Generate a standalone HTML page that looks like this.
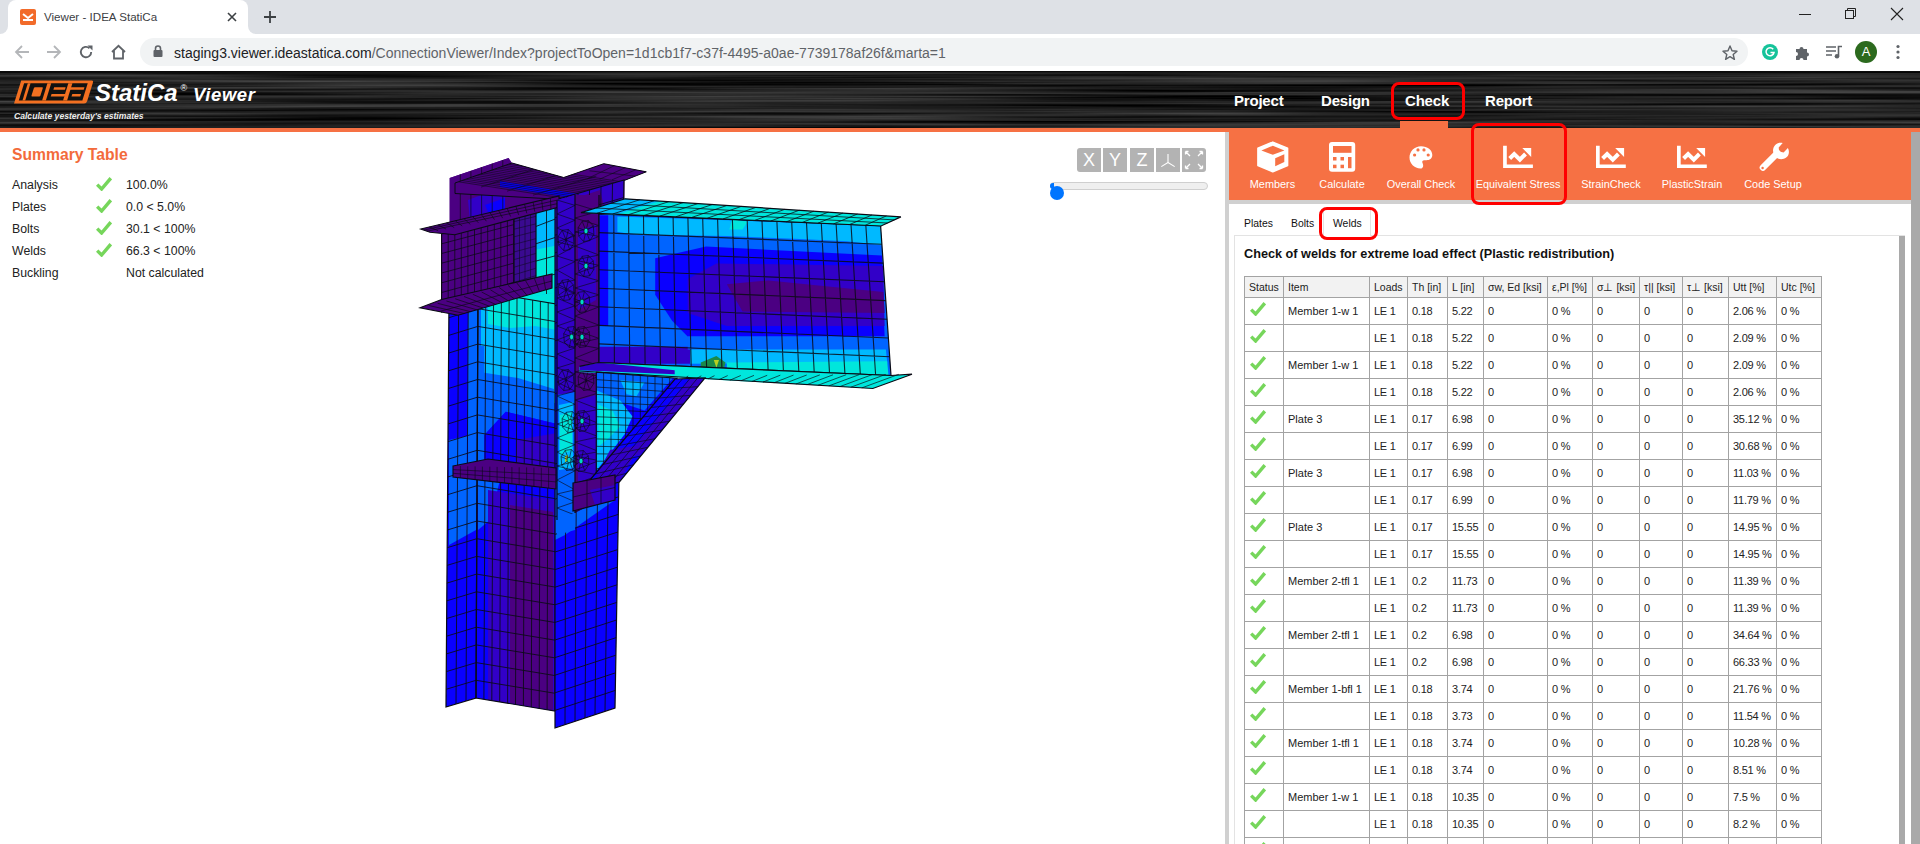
<!DOCTYPE html>
<html><head><meta charset="utf-8"><title>Viewer - IDEA StatiCa</title>
<style>
*{margin:0;padding:0;box-sizing:border-box}
html,body{width:1920px;height:844px;overflow:hidden;background:#fff;font-family:"Liberation Sans",sans-serif;color:#000}
.a{position:absolute}
#tabs{left:0;top:0;width:1920px;height:34px;background:#dee1e6}
#tab{left:8px;top:0;width:240px;height:34px;background:#fff;border-radius:8px 8px 0 0}
#toolbar{left:0;top:34px;width:1920px;height:37px;background:#fff}
#omni{left:140px;top:38px;width:1608px;height:28px;background:#f1f3f4;border-radius:14px}
#hdr{left:0;top:71px;width:1920px;height:57px;background:#1f1f1f;overflow:hidden}
#oline{left:0;top:128px;width:1920px;height:4px;background:#f67144}
.nav{color:#fff;font-weight:bold;font-size:15px;top:91.5px;letter-spacing:-0.2px}
.redbox{border:3.5px solid #f00;border-radius:8px}
#sep{left:1225px;top:132px;width:4px;height:712px;background:#d0d0d0}
#otb{left:1229px;top:128px;width:682px;height:72px;background:#f67144}
#gband{left:1229px;top:200px;width:682px;height:4px;background:#d0d0d0}
#oscroll{left:1911px;top:132px;width:9px;height:712px;background:#a9a9a9}
.tbtn{top:128px;height:72px;color:#fff;font-size:10.9px;text-align:center}
.tbtn svg{position:absolute;left:50%;top:14px;margin-left:-16px}
.tbtn span{position:absolute;left:0;right:0;top:50px;white-space:nowrap}
.sumrow{left:12px;font-size:12.3px;color:#222;height:22px;line-height:22px}
.vbtn{top:148px;width:24px;height:24px;background:#b3b3b3;color:#fff;font-size:18px;text-align:center;line-height:24px}
table{border-collapse:collapse;font-size:11px;table-layout:fixed}
td,th{border:1px solid #a3a3a3;height:27px;padding:0 0 0 4px;text-align:left;font-weight:normal;white-space:nowrap;overflow:hidden;color:#222}
th{height:21px;background:#f2f2f2;font-size:10.5px}
td{letter-spacing:-0.25px}
td.it{letter-spacing:0}
.ck{display:block;width:16px;height:15px;margin-left:1px;position:relative;top:-2.5px}
</style></head><body>
<!-- browser tab strip -->
<div id="tabs" class="a"></div>
<div id="tab" class="a"></div>
<div class="a" style="left:0;top:26px;width:8px;height:8px;background:#fff"></div><div class="a" style="left:-8px;top:18px;width:16px;height:16px;border-radius:50%;background:#dee1e6"></div>
<div class="a" style="left:248px;top:26px;width:8px;height:8px;background:#fff"></div><div class="a" style="left:248px;top:18px;width:16px;height:16px;border-radius:50%;background:#dee1e6"></div>
<div class="a" style="left:20px;top:9px;width:16px;height:16px;background:#f26b2a;border-radius:2px"><svg width="16" height="16" viewBox="0 0 16 16"><path d="M3 5 L8 9 L13 5" stroke="#fff" stroke-width="2" fill="none"/><rect x="3" y="10" width="10" height="2" fill="#fff"/></svg></div>
<div class="a" style="left:44px;top:9.5px;font-size:11.6px;color:#3c4043">Viewer - IDEA StatiCa</div>
<svg class="a" style="left:226px;top:11px" width="12" height="12" viewBox="0 0 12 12"><path d="M2 2L10 10M10 2L2 10" stroke="#3c4043" stroke-width="1.6"/></svg>
<svg class="a" style="left:263px;top:10px" width="14" height="14" viewBox="0 0 14 14"><path d="M7 1V13M1 7H13" stroke="#3c4043" stroke-width="1.8"/></svg>
<svg class="a" style="left:1798px;top:8px" width="14" height="14"><path d="M1 6.5H13" stroke="#222" stroke-width="1"/></svg>
<svg class="a" style="left:1844px;top:7px" width="14" height="14"><rect x="1.5" y="3.5" width="8" height="8" fill="none" stroke="#222"/><path d="M3.5 3.5V1.5H11.5V9.5H9.5" fill="none" stroke="#222"/></svg>
<svg class="a" style="left:1890px;top:7px" width="14" height="14"><path d="M1 1L13 13M13 1L1 13" stroke="#222" stroke-width="1.1"/></svg>
<!-- toolbar -->
<div id="toolbar" class="a"></div>
<svg class="a" style="left:14px;top:44px" width="16" height="16" viewBox="0 0 16 16"><path d="M15 8H2M8 2L2 8L8 14" stroke="#b4b6b9" stroke-width="1.8" fill="none"/></svg>
<svg class="a" style="left:46px;top:44px" width="16" height="16" viewBox="0 0 16 16"><path d="M1 8H14M8 2L14 8L8 14" stroke="#b4b6b9" stroke-width="1.8" fill="none"/></svg>
<svg class="a" style="left:78px;top:44px" width="16" height="16" viewBox="0 0 16 16"><path d="M13.2 8A5.2 5.2 0 1 1 11.5 4.2" stroke="#5f6368" stroke-width="1.9" fill="none"/><path d="M9.5 1.5H14.5V6.5Z" fill="#5f6368"/></svg>
<svg class="a" style="left:110px;top:44px" width="17" height="16" viewBox="0 0 17 16"><path d="M2 8L8.5 1.8L15 8M4 6.5V14.5H13V6.5" stroke="#5f6368" stroke-width="1.8" fill="none"/></svg>
<div id="omni" class="a"></div>
<svg class="a" style="left:153px;top:45px" width="10" height="12" viewBox="0 0 10 12"><rect x="0.5" y="5" width="9" height="7" rx="1" fill="#5f6368"/><path d="M2.5 5.5V3.5A2.5 2.5 0 0 1 7.5 3.5V5.5" stroke="#5f6368" stroke-width="1.6" fill="none"/></svg>
<div class="a" style="left:174px;top:45px;font-size:14px;color:#202124;white-space:nowrap">staging3.viewer.ideastatica.com<span style="color:#5f6368">/ConnectionViewer/Index?projectToOpen=1d1cb1f7-c37f-4495-a0ae-7739178af26f&amp;marta=1</span></div>
<svg class="a" style="left:1722px;top:45px" width="16" height="15" viewBox="0 0 16 15"><path d="M8 1L10 5.8L15 6.2L11.2 9.5L12.4 14.3L8 11.7L3.6 14.3L4.8 9.5L1 6.2L6 5.8Z" stroke="#5f6368" stroke-width="1.4" fill="none" stroke-linejoin="round"/></svg>
<div class="a" style="left:1762px;top:44px;width:16px;height:16px;border-radius:50%;background:#15c39a"></div>
<svg class="a" style="left:1762px;top:44px" width="16" height="16" viewBox="0 0 16 16"><path d="M11.2 5.2A4 4 0 1 0 12 8.5H8.5" stroke="#fff" stroke-width="1.5" fill="none"/></svg>
<svg class="a" style="left:1795px;top:45px" width="15" height="15" viewBox="0 0 15 15"><path d="M1 4H4.5A2 2 0 0 1 8.5 4H12V7.5A2 2 0 0 1 12 11.5V15H8.5A2 2 0 0 0 4.5 15H1V11A2 2 0 0 0 1 7Z" fill="#5f6368"/></svg>
<svg class="a" style="left:1826px;top:45px" width="17" height="14" viewBox="0 0 17 14"><path d="M0 2H10M0 6H10M0 10H6" stroke="#5f6368" stroke-width="1.6"/><path d="M12.5 11V1.5H16" stroke="#5f6368" stroke-width="1.6" fill="none"/><circle cx="11" cy="11.2" r="2.3" fill="#5f6368"/></svg>
<div class="a" style="left:1855px;top:41px;width:22px;height:22px;border-radius:50%;background:#2c6a1e;color:#fff;font-size:13px;text-align:center;line-height:22px">A</div>
<svg class="a" style="left:1895px;top:44px" width="6" height="16"><circle cx="3" cy="2.5" r="1.6" fill="#5f6368"/><circle cx="3" cy="8" r="1.6" fill="#5f6368"/><circle cx="3" cy="13.5" r="1.6" fill="#5f6368"/></svg>

<!-- app header -->
<svg id="hdr" class="a" width="1920" height="57" viewBox="0 0 1920 57"><filter id="brush" x="0" y="0" width="100%" height="100%" color-interpolation-filters="sRGB"><feTurbulence type="fractalNoise" baseFrequency="0.002 0.3" numOctaves="3" seed="7"/><feColorMatrix type="matrix" values="0 0 0 0.45 -0.1  0 0 0 0.45 -0.1  0 0 0 0.45 -0.1  0 0 0 0 1"/></filter><rect width="1920" height="57" fill="#1c1c1c"/><rect width="1920" height="57" filter="url(#brush)"/><rect width="1920" height="1.5" fill="#0a0a0a"/></svg>
<div id="oline" class="a"></div>
<svg class="a" style="left:10px;top:76px" width="260" height="48" viewBox="10 76 260 48">
<g transform="translate(14.5 103.4) skewX(-17.4) scale(0.922 1)">
<path d="M0 0V-22.9H76.5Q78.5 -22.9 78.5 -20.5V-2.5Q78.5 0 76 0Z" fill="#f37021" transform="translate(-0.5 0)"/>
<rect x="3.6" y="-20.1" width="69" height="17.1" fill="#111"/>
<g fill="#f37021">
<rect x="7.6" y="-20.1" width="3" height="17.1"/>
<rect x="28.9" y="-20.1" width="4.1" height="17.1"/>
<rect x="51.6" y="-20.1" width="4.4" height="17.1"/>
<rect x="15.8" y="-16.2" width="9.7" height="9.4" rx="1"/>
<rect x="37.5" y="-16.2" width="12.5" height="2.5"/>
<rect x="37" y="-9.4" width="15" height="2.6"/>
<rect x="55" y="-16.2" width="15.4" height="2.5"/>
<rect x="59.5" y="-9.4" width="9.5" height="2.6"/>
</g>
</g>
<text x="95" y="100.6" font-family="Liberation Sans" font-weight="bold" font-style="italic" font-size="24" fill="#fff">StatiCa</text>
<text x="180.5" y="90.5" font-family="Liberation Sans" font-size="9" fill="#fff">®</text>
<text x="193" y="100.6" font-family="Liberation Sans" font-weight="bold" font-style="italic" font-size="18.5" fill="#fff" letter-spacing="0.6">Viewer</text>
<text x="14" y="118.5" font-family="Liberation Sans" font-weight="bold" font-style="italic" font-size="8.6" fill="#eee">Calculate yesterday's estimates</text>
</svg>

<div class="a nav" style="left:1234px">Project</div>
<div class="a nav" style="left:1321px">Design</div>
<div class="a nav" style="left:1405px">Check</div>
<div class="a nav" style="left:1485px">Report</div>
<div class="a redbox" style="left:1391px;top:82px;width:74px;height:38px"></div>
<div class="a" style="left:1400px;top:121px;width:48px;height:7px;background:#f67144"></div>

<!-- separators / right toolbar -->
<div id="sep" class="a"></div>
<div id="otb" class="a"></div>
<div id="gband" class="a"></div>
<div id="oscroll" class="a"></div>
<svg class="a" style="left:1229px;top:128px" width="682" height="72" viewBox="1229 128 682 72">
<g fill="#fff">
<path d="M1272.8 142.1L1287.6 148.2V165.5L1272.8 171.8L1257.9 165.5V148.2Z" stroke="#fff" stroke-width="1.5" stroke-linejoin="round"/>
<path d="M1261.4 150.4L1272.8 145.8L1284.4 150.4L1272.8 154.8Z" fill="#f67144"/>
<path d="M1275.2 158.2L1284.3 154.3V161.9L1275.2 166.2Z" fill="#f67144"/>
<rect x="1329" y="142" width="26.2" height="29.8" rx="3"/>
<g fill="#f67144"><rect x="1333" y="146" width="18.5" height="6.8"/><rect x="1333" y="157" width="3.5" height="3.5"/><rect x="1340.5" y="157" width="3.5" height="3.5"/><rect x="1333" y="164.7" width="3.5" height="3.5"/><rect x="1340.5" y="164.7" width="3.5" height="3.5"/><rect x="1348" y="157" width="3.5" height="11.2"/></g>
<path d="M1421 146.2C1427.5 146.2 1432.3 150 1432.3 155C1432.3 158.5 1429.5 160.2 1426.5 160.2H1424.2C1422.6 160.2 1421.8 161.6 1422.5 163C1423.2 164.5 1423.3 165.7 1423 166.8C1422.5 168.2 1421.5 168.5 1420.5 168.5C1414.2 168.5 1409.5 163.3 1409.5 157.5C1409.5 151.2 1414.5 146.2 1421 146.2Z"/>
<g fill="#f67144"><circle cx="1418" cy="149.9" r="1.6"/><circle cx="1424" cy="149.9" r="1.6"/><circle cx="1414.6" cy="155" r="1.6"/><circle cx="1428.2" cy="155" r="1.6"/></g>
<g id="chart"><path d="M1503.1 145.7H1506.8V164.4H1532.9V168H1503.1Z"/><path d="M1509.7 158.5L1514.2 154L1519.9 159.7L1525.5 154" stroke="#fff" stroke-width="4" fill="none" stroke-linejoin="miter"/><path d="M1522.3 148.1H1531.2V157L1527 152.8Z"/></g>
<g transform="translate(92.9 0)"><path d="M1503.1 145.7H1506.8V164.4H1532.9V168H1503.1Z"/><path d="M1509.7 158.5L1514.2 154L1519.9 159.7L1525.5 154" stroke="#fff" stroke-width="4" fill="none" stroke-linejoin="miter"/><path d="M1522.3 148.1H1531.2V157L1527 152.8Z"/></g>
<g transform="translate(173.9 0)"><path d="M1503.1 145.7H1506.8V164.4H1532.9V168H1503.1Z"/><path d="M1509.7 158.5L1514.2 154L1519.9 159.7L1525.5 154" stroke="#fff" stroke-width="4" fill="none" stroke-linejoin="miter"/><path d="M1522.3 148.1H1531.2V157L1527 152.8Z"/></g>
<path d="M1763 167.5L1777.5 153" stroke="#fff" stroke-width="6.6" stroke-linecap="round"/>
<path d="M1782.7 143.1L1778.7 147.4L1779.1 151.6L1783.6 152.4L1787.9 148.1C1789.8 151.5 1789 155.5 1786.2 157.6C1783 160 1778.8 159.8 1776 157.3C1772.5 154 1772 148.8 1775 145.2C1777 142.8 1780 142.2 1782.7 143.1Z"/>
<circle cx="1762.6" cy="168" r="1.2" fill="#f67144"/>
</g>
</svg>
<div class="a tbtn" style="left:1242px;width:61px"><span>Members</span></div>
<div class="a tbtn" style="left:1312px;width:60px"><span>Calculate</span></div>
<div class="a tbtn" style="left:1381px;width:80px"><span>Overall Check</span></div>
<div class="a tbtn" style="left:1468px;width:100px"><span>Equivalent Stress</span></div>
<div class="a tbtn" style="left:1571px;width:80px"><span>StrainCheck</span></div>
<div class="a tbtn" style="left:1652px;width:80px"><span>PlasticStrain</span></div>
<div class="a tbtn" style="left:1733px;width:80px"><span>Code Setup</span></div>
<div class="a redbox" style="left:1471px;top:123px;width:96px;height:82px"></div>


<!-- panel -->
<div class="a" style="left:1234px;top:235px;width:671px;height:609px;border:1px solid #e3e3e3;border-bottom:none"></div>
<div class="a" style="left:1899px;top:236px;width:6px;height:608px;background:#a9a9a9"></div>
<div class="a" style="left:1244px;top:217.5px;font-size:10.4px;color:#111">Plates</div>
<div class="a" style="left:1291px;top:217.5px;font-size:10.4px;color:#111">Bolts</div>
<div class="a" style="left:1323px;top:209px;width:48px;height:27px;background:#fff;border:1px solid #e3e3e3;border-bottom:none"></div>
<div class="a" style="left:1333px;top:217.5px;font-size:10.4px;color:#111">Welds</div>
<div class="a redbox" style="left:1319px;top:207px;width:59px;height:33px"></div>
<div class="a" style="left:1244px;top:247px;font-size:12.7px;font-weight:bold;color:#111;white-space:nowrap">Check of welds for extreme load effect (Plastic redistribution)</div>

<div id="tbl" class="a" style="left:1244px;top:276px"><table style="width:578px"><colgroup><col style="width:39px"><col style="width:86px"><col style="width:38px"><col style="width:40px"><col style="width:36px"><col style="width:64px"><col style="width:45px"><col style="width:47px"><col style="width:43px"><col style="width:46px"><col style="width:48px"><col style="width:45px"></colgroup><tr><th>Status</th><th>Item</th><th>Loads</th><th>Th [in]</th><th>L [in]</th><th>&sigma;w, Ed [ksi]</th><th>&epsilon;,Pl [%]</th><th>&sigma;&perp; [ksi]</th><th>&tau;|| [ksi]</th><th>&tau;&perp; [ksi]</th><th>Utt [%]</th><th>Utc [%]</th></tr><tr><td><svg class="ck" viewBox="0 0 16 15"><path d="M1.2 8.6L5.6 13L14.8 2.2" stroke="#76d65b" stroke-width="3.4" fill="none" stroke-linecap="butt"/></svg></td><td class="it">Member 1-w 1</td><td>LE 1</td><td>0.18</td><td>5.22</td><td>0</td><td>0 %</td><td>0</td><td>0</td><td>0</td><td>2.06 %</td><td>0 %</td></tr><tr><td><svg class="ck" viewBox="0 0 16 15"><path d="M1.2 8.6L5.6 13L14.8 2.2" stroke="#76d65b" stroke-width="3.4" fill="none" stroke-linecap="butt"/></svg></td><td class="it"></td><td>LE 1</td><td>0.18</td><td>5.22</td><td>0</td><td>0 %</td><td>0</td><td>0</td><td>0</td><td>2.09 %</td><td>0 %</td></tr><tr><td><svg class="ck" viewBox="0 0 16 15"><path d="M1.2 8.6L5.6 13L14.8 2.2" stroke="#76d65b" stroke-width="3.4" fill="none" stroke-linecap="butt"/></svg></td><td class="it">Member 1-w 1</td><td>LE 1</td><td>0.18</td><td>5.22</td><td>0</td><td>0 %</td><td>0</td><td>0</td><td>0</td><td>2.09 %</td><td>0 %</td></tr><tr><td><svg class="ck" viewBox="0 0 16 15"><path d="M1.2 8.6L5.6 13L14.8 2.2" stroke="#76d65b" stroke-width="3.4" fill="none" stroke-linecap="butt"/></svg></td><td class="it"></td><td>LE 1</td><td>0.18</td><td>5.22</td><td>0</td><td>0 %</td><td>0</td><td>0</td><td>0</td><td>2.06 %</td><td>0 %</td></tr><tr><td><svg class="ck" viewBox="0 0 16 15"><path d="M1.2 8.6L5.6 13L14.8 2.2" stroke="#76d65b" stroke-width="3.4" fill="none" stroke-linecap="butt"/></svg></td><td class="it">Plate 3</td><td>LE 1</td><td>0.17</td><td>6.98</td><td>0</td><td>0 %</td><td>0</td><td>0</td><td>0</td><td>35.12 %</td><td>0 %</td></tr><tr><td><svg class="ck" viewBox="0 0 16 15"><path d="M1.2 8.6L5.6 13L14.8 2.2" stroke="#76d65b" stroke-width="3.4" fill="none" stroke-linecap="butt"/></svg></td><td class="it"></td><td>LE 1</td><td>0.17</td><td>6.99</td><td>0</td><td>0 %</td><td>0</td><td>0</td><td>0</td><td>30.68 %</td><td>0 %</td></tr><tr><td><svg class="ck" viewBox="0 0 16 15"><path d="M1.2 8.6L5.6 13L14.8 2.2" stroke="#76d65b" stroke-width="3.4" fill="none" stroke-linecap="butt"/></svg></td><td class="it">Plate 3</td><td>LE 1</td><td>0.17</td><td>6.98</td><td>0</td><td>0 %</td><td>0</td><td>0</td><td>0</td><td>11.03 %</td><td>0 %</td></tr><tr><td><svg class="ck" viewBox="0 0 16 15"><path d="M1.2 8.6L5.6 13L14.8 2.2" stroke="#76d65b" stroke-width="3.4" fill="none" stroke-linecap="butt"/></svg></td><td class="it"></td><td>LE 1</td><td>0.17</td><td>6.99</td><td>0</td><td>0 %</td><td>0</td><td>0</td><td>0</td><td>11.79 %</td><td>0 %</td></tr><tr><td><svg class="ck" viewBox="0 0 16 15"><path d="M1.2 8.6L5.6 13L14.8 2.2" stroke="#76d65b" stroke-width="3.4" fill="none" stroke-linecap="butt"/></svg></td><td class="it">Plate 3</td><td>LE 1</td><td>0.17</td><td>15.55</td><td>0</td><td>0 %</td><td>0</td><td>0</td><td>0</td><td>14.95 %</td><td>0 %</td></tr><tr><td><svg class="ck" viewBox="0 0 16 15"><path d="M1.2 8.6L5.6 13L14.8 2.2" stroke="#76d65b" stroke-width="3.4" fill="none" stroke-linecap="butt"/></svg></td><td class="it"></td><td>LE 1</td><td>0.17</td><td>15.55</td><td>0</td><td>0 %</td><td>0</td><td>0</td><td>0</td><td>14.95 %</td><td>0 %</td></tr><tr><td><svg class="ck" viewBox="0 0 16 15"><path d="M1.2 8.6L5.6 13L14.8 2.2" stroke="#76d65b" stroke-width="3.4" fill="none" stroke-linecap="butt"/></svg></td><td class="it">Member 2-tfl 1</td><td>LE 1</td><td>0.2</td><td>11.73</td><td>0</td><td>0 %</td><td>0</td><td>0</td><td>0</td><td>11.39 %</td><td>0 %</td></tr><tr><td><svg class="ck" viewBox="0 0 16 15"><path d="M1.2 8.6L5.6 13L14.8 2.2" stroke="#76d65b" stroke-width="3.4" fill="none" stroke-linecap="butt"/></svg></td><td class="it"></td><td>LE 1</td><td>0.2</td><td>11.73</td><td>0</td><td>0 %</td><td>0</td><td>0</td><td>0</td><td>11.39 %</td><td>0 %</td></tr><tr><td><svg class="ck" viewBox="0 0 16 15"><path d="M1.2 8.6L5.6 13L14.8 2.2" stroke="#76d65b" stroke-width="3.4" fill="none" stroke-linecap="butt"/></svg></td><td class="it">Member 2-tfl 1</td><td>LE 1</td><td>0.2</td><td>6.98</td><td>0</td><td>0 %</td><td>0</td><td>0</td><td>0</td><td>34.64 %</td><td>0 %</td></tr><tr><td><svg class="ck" viewBox="0 0 16 15"><path d="M1.2 8.6L5.6 13L14.8 2.2" stroke="#76d65b" stroke-width="3.4" fill="none" stroke-linecap="butt"/></svg></td><td class="it"></td><td>LE 1</td><td>0.2</td><td>6.98</td><td>0</td><td>0 %</td><td>0</td><td>0</td><td>0</td><td>66.33 %</td><td>0 %</td></tr><tr><td><svg class="ck" viewBox="0 0 16 15"><path d="M1.2 8.6L5.6 13L14.8 2.2" stroke="#76d65b" stroke-width="3.4" fill="none" stroke-linecap="butt"/></svg></td><td class="it">Member 1-bfl 1</td><td>LE 1</td><td>0.18</td><td>3.74</td><td>0</td><td>0 %</td><td>0</td><td>0</td><td>0</td><td>21.76 %</td><td>0 %</td></tr><tr><td><svg class="ck" viewBox="0 0 16 15"><path d="M1.2 8.6L5.6 13L14.8 2.2" stroke="#76d65b" stroke-width="3.4" fill="none" stroke-linecap="butt"/></svg></td><td class="it"></td><td>LE 1</td><td>0.18</td><td>3.73</td><td>0</td><td>0 %</td><td>0</td><td>0</td><td>0</td><td>11.54 %</td><td>0 %</td></tr><tr><td><svg class="ck" viewBox="0 0 16 15"><path d="M1.2 8.6L5.6 13L14.8 2.2" stroke="#76d65b" stroke-width="3.4" fill="none" stroke-linecap="butt"/></svg></td><td class="it">Member 1-tfl 1</td><td>LE 1</td><td>0.18</td><td>3.74</td><td>0</td><td>0 %</td><td>0</td><td>0</td><td>0</td><td>10.28 %</td><td>0 %</td></tr><tr><td><svg class="ck" viewBox="0 0 16 15"><path d="M1.2 8.6L5.6 13L14.8 2.2" stroke="#76d65b" stroke-width="3.4" fill="none" stroke-linecap="butt"/></svg></td><td class="it"></td><td>LE 1</td><td>0.18</td><td>3.74</td><td>0</td><td>0 %</td><td>0</td><td>0</td><td>0</td><td>8.51 %</td><td>0 %</td></tr><tr><td><svg class="ck" viewBox="0 0 16 15"><path d="M1.2 8.6L5.6 13L14.8 2.2" stroke="#76d65b" stroke-width="3.4" fill="none" stroke-linecap="butt"/></svg></td><td class="it">Member 1-w 1</td><td>LE 1</td><td>0.18</td><td>10.35</td><td>0</td><td>0 %</td><td>0</td><td>0</td><td>0</td><td>7.5 %</td><td>0 %</td></tr><tr><td><svg class="ck" viewBox="0 0 16 15"><path d="M1.2 8.6L5.6 13L14.8 2.2" stroke="#76d65b" stroke-width="3.4" fill="none" stroke-linecap="butt"/></svg></td><td class="it"></td><td>LE 1</td><td>0.18</td><td>10.35</td><td>0</td><td>0 %</td><td>0</td><td>0</td><td>0</td><td>8.2 %</td><td>0 %</td></tr><tr><td><svg class="ck" viewBox="0 0 16 15"><path d="M1.2 8.6L5.6 13L14.8 2.2" stroke="#76d65b" stroke-width="3.4" fill="none" stroke-linecap="butt"/></svg></td><td class="it">Member 1-w 1</td><td>LE 1</td><td>0.18</td><td>10.35</td><td>0</td><td>0 %</td><td>0</td><td>0</td><td>0</td><td>7.5 %</td><td>0 %</td></tr></table></div>

<!-- summary -->
<div class="a" style="left:12px;top:146px;font-size:15.7px;font-weight:bold;color:#f36b3b">Summary Table</div>
<div class="a sumrow" style="top:174px">Analysis</div><svg class="a" style="left:96px;top:176px" width="16" height="15" viewBox="0 0 16 15"><path d="M1.2 8.6L5.6 13L14.8 2.2" stroke="#76d65b" stroke-width="3.4" fill="none"/></svg><div class="a sumrow" style="left:126px;top:174px">100.0%</div><div class="a sumrow" style="top:196px">Plates</div><svg class="a" style="left:96px;top:198px" width="16" height="15" viewBox="0 0 16 15"><path d="M1.2 8.6L5.6 13L14.8 2.2" stroke="#76d65b" stroke-width="3.4" fill="none"/></svg><div class="a sumrow" style="left:126px;top:196px">0.0 &lt; 5.0%</div><div class="a sumrow" style="top:218px">Bolts</div><svg class="a" style="left:96px;top:220px" width="16" height="15" viewBox="0 0 16 15"><path d="M1.2 8.6L5.6 13L14.8 2.2" stroke="#76d65b" stroke-width="3.4" fill="none"/></svg><div class="a sumrow" style="left:126px;top:218px">30.1 &lt; 100%</div><div class="a sumrow" style="top:240px">Welds</div><svg class="a" style="left:96px;top:242px" width="16" height="15" viewBox="0 0 16 15"><path d="M1.2 8.6L5.6 13L14.8 2.2" stroke="#76d65b" stroke-width="3.4" fill="none"/></svg><div class="a sumrow" style="left:126px;top:240px">66.3 &lt; 100%</div><div class="a sumrow" style="top:262px">Buckling</div><div class="a sumrow" style="left:126px;top:262px">Not calculated</div>

<!-- view buttons -->
<div class="a vbtn" style="left:1077px;border-radius:3px 0 0 3px">X</div>
<div class="a vbtn" style="left:1103px">Y</div>
<div class="a vbtn" style="left:1130px">Z</div>
<div class="a vbtn" style="left:1156px"><svg width="24" height="24" style="position:absolute;left:0;top:0"><path d="M12 6V14.5M12 14.5L5.3 18.6M12 14.5L18.7 18.6" stroke="#fff" stroke-width="1.1" fill="none"/></svg></div>
<div class="a vbtn" style="left:1182px;border-radius:0 3px 3px 0"><svg width="24" height="24" style="position:absolute;left:0;top:0" stroke="#fff" stroke-width="1.3" fill="none"><path d="M3.5 3.5L8 8M3.5 3.5H6.5M3.5 3.5V6.5"/><path d="M20.5 3.5L16 8M20.5 3.5H17.5M20.5 3.5V6.5"/><path d="M3.5 20.5L8 16M3.5 20.5H6.5M3.5 20.5V17.5"/><path d="M20.5 20.5L16 16M20.5 20.5H17.5M20.5 20.5V17.5"/></svg></div>
<div class="a" style="left:1050px;top:182px;width:158px;height:8px;background:#efefef;border:1px solid #cfcfcf;border-radius:4px"></div>
<div class="a" style="left:1050px;top:183px;width:4px;height:6px;background:#0075ff;border-radius:3px 0 0 3px"></div>
<div class="a" style="left:1050px;top:186px;width:14px;height:14px;background:#0075ff;border-radius:50%"></div>

<svg class="a" style="left:0;top:0" width="1225" height="844" viewBox="0 0 1225 844"><polygon points="449.7,178.0 508.7,158.0 512.0,163.0 563.7,177.5 603.8,163.7 646.3,171.8 624.4,180.4 624.4,199.0 559.0,210.0 534.0,215.0 449.7,240.0" fill="#4b0082"/><polygon points="449.7,178.0 508.7,158.0 508.7,232.0 449.7,252.0" fill="#4b0082"/><polygon points="468.0,200.0 500.0,188.0 505.0,196.0 505.0,212.0 470.0,222.0" fill="#3200c8"/><polygon points="485.0,205.0 505.0,198.0 505.0,210.0 490.0,216.0" fill="#0a00ff"/><path d="M460.3 174.4L460.3 248.4M470.9 170.8L470.9 244.8M481.6 167.2L481.6 241.2M492.2 163.6L492.2 237.6M502.8 160.0L502.8 234.0" stroke="#0a0a14" stroke-width="0.8" stroke-opacity="0.85" fill="none"/><polygon points="455.0,183.0 512.0,163.0 563.7,177.5 603.8,163.7 646.3,171.8 624.4,180.4 559.0,199.3 455.0,193.5" fill="#4b0082"/><polygon points="500.0,181.0 578.0,194.0 578.0,199.0 500.0,187.0" fill="#0a00ff"/><clipPath id="c1"><polygon points="455.0,183.0 512.0,163.0 563.7,177.5 603.8,163.7 646.3,171.8 624.4,180.4 559.0,199.3 455.0,193.5"/></clipPath><path d="M458.6 181.8L563.1 198.1M462.1 180.5L567.2 196.9M465.7 179.2L571.3 195.8M469.2 178.0L575.4 194.6M472.8 176.8L579.4 193.4M476.4 175.5L583.5 192.2M479.9 174.2L587.6 191.0M483.5 173.0L591.7 189.9M487.1 171.8L595.8 188.7M490.6 170.5L599.9 187.5M494.2 169.2L604.0 186.3M497.8 168.0L608.0 185.1M501.3 166.8L612.1 183.9M504.9 165.5L616.2 182.8M508.4 164.2L620.3 181.6M481.0 187.1L540.1 167.3M507.0 191.2L568.2 171.7M533.0 195.2L596.3 176.1" stroke="#0a0a14" stroke-width="0.7" stroke-opacity="0.85" fill="none" clip-path="url(#c1)"/><clipPath id="c2"><polygon points="455.0,183.0 512.0,163.0 563.7,177.5 603.8,163.7 646.3,171.8 624.4,180.4 559.0,199.3 455.0,193.5"/></clipPath><path d="M614.4 165.7L587.4 178.6M625.0 167.8L599.7 179.2M635.7 169.8L612.0 179.8M589.4 170.8L635.3 176.1" stroke="#0a0a14" stroke-width="0.7" stroke-opacity="0.85" fill="none" clip-path="url(#c2)"/><polygon points="455.0,183.0 512.0,163.0 563.7,177.5 603.8,163.7 646.3,171.8 624.4,180.4 559.0,199.3 455.0,193.5" fill="none" stroke="#0a0a14" stroke-width="1.0"/><polygon points="449.0,300.0 478.0,291.0 476.0,698.0 446.0,707.0" fill="#0a00ff"/><polygon points="478.0,291.0 556.0,304.0 555.0,711.0 476.0,698.0" fill="#0a00ff"/><polygon points="449.0,440.0 467.0,436.0 467.0,480.0 449.0,485.0" fill="#0064ff"/><polygon points="468.0,300.0 478.0,297.0 478.0,480.0 468.0,482.0" fill="#0064ff"/><polygon points="472.0,300.0 557.0,296.0 557.0,424.0 505.8,411.8 484.4,434.9 484.4,480.0 472.0,482.0" fill="#0064ff"/><polygon points="481.0,298.0 557.0,296.0 557.0,403.0 554.0,403.0 554.0,389.0 518.0,378.0 484.4,372.7 484.4,346.0 481.0,346.0" fill="#00b9ff"/><polygon points="488.0,296.0 557.0,292.0 557.0,330.0 535.0,326.0 510.0,328.0 488.0,324.0" fill="#00e6dc"/><polygon points="484.4,434.9 505.8,411.8 557.0,424.0 557.0,480.0 484.4,480.0" fill="#0a00ff"/><polygon points="516.0,440.0 557.0,433.0 557.0,480.0 516.0,480.0" fill="#3200c8"/><polygon points="449.0,480.0 478.0,475.0 476.0,530.0 449.0,545.0" fill="#0064ff"/><polygon points="478.0,478.0 500.0,480.0 490.0,520.0 478.0,530.0" fill="#0064ff"/><polygon points="488.0,490.0 555.0,500.0 555.0,711.0 488.0,700.0" fill="#3200c8"/><polygon points="510.0,505.0 553.0,512.0 553.0,710.0 510.0,703.0" fill="#4b0082"/><path d="M458.7 297.0L456.0 704.0M468.3 294.0L466.0 701.0M448.9 317.7L477.9 308.7M448.7 335.4L477.8 326.4M448.6 353.1L477.7 344.1M448.5 370.8L477.7 361.8M448.3 388.5L477.6 379.5M448.2 406.2L477.5 397.2M448.1 423.9L477.4 414.9M448.0 441.6L477.3 432.6M447.8 459.3L477.2 450.3M447.7 477.0L477.1 468.0M447.6 494.7L477.0 485.7M447.4 512.3L477.0 503.3M447.3 530.0L476.9 521.0M447.2 547.7L476.8 538.7M447.0 565.4L476.7 556.4M446.9 583.1L476.6 574.1M446.8 600.8L476.5 591.8M446.7 618.5L476.4 609.5M446.5 636.2L476.3 627.2M446.4 653.9L476.3 644.9M446.3 671.6L476.2 662.6M446.1 689.3L476.1 680.3" stroke="#0a0a14" stroke-width="1.0" stroke-opacity="0.85" fill="none"/><polygon points="449.0,300.0 478.0,291.0 476.0,698.0 446.0,707.0" fill="none" stroke="#0a0a14" stroke-width="1.2"/><path d="M485.8 292.3L483.9 699.3M493.6 293.6L491.8 700.6M501.4 294.9L499.7 701.9M509.2 296.2L507.6 703.2M517.0 297.5L515.5 704.5M524.8 298.8L523.4 705.8M532.6 300.1L531.3 707.1M540.4 301.4L539.2 708.4M548.2 302.7L547.1 709.7M477.9 308.7L556.0 321.7M477.8 326.4L555.9 339.4M477.7 344.1L555.9 357.1M477.7 361.8L555.8 374.8M477.6 379.5L555.8 392.5M477.5 397.2L555.7 410.2M477.4 414.9L555.7 427.9M477.3 432.6L555.7 445.6M477.2 450.3L555.6 463.3M477.1 468.0L555.6 481.0M477.0 485.7L555.5 498.7M477.0 503.3L555.5 516.3M476.9 521.0L555.4 534.0M476.8 538.7L555.4 551.7M476.7 556.4L555.3 569.4M476.6 574.1L555.3 587.1M476.5 591.8L555.3 604.8M476.4 609.5L555.2 622.5M476.3 627.2L555.2 640.2M476.3 644.9L555.1 657.9M476.2 662.6L555.1 675.6M476.1 680.3L555.0 693.3" stroke="#0a0a14" stroke-width="1.0" stroke-opacity="0.85" fill="none"/><polygon points="478.0,291.0 556.0,304.0 555.0,711.0 476.0,698.0" fill="none" stroke="#0a0a14" stroke-width="1.2"/><polygon points="534.0,210.0 559.0,199.0 559.0,292.0 534.0,296.0" fill="#00b9ff"/><polygon points="534.0,250.0 559.0,245.0 559.0,292.0 534.0,296.0" fill="#00e6dc"/><path d="M546.5 204.5L546.5 294.0M534.0 227.2L559.0 217.6M534.0 244.4L559.0 236.2M534.0 261.6L559.0 254.8M534.0 278.8L559.0 273.4" stroke="#0a0a14" stroke-width="1.0" stroke-opacity="0.85" fill="none"/><polygon points="555.0,200.0 624.0,180.0 615.0,708.0 555.0,728.0" fill="#0a00ff"/><polygon points="555.0,200.0 624.0,180.0 624.0,250.0 555.0,270.0" fill="#3200c8"/><polygon points="570.0,200.0 600.0,190.0 610.0,230.0 575.0,240.0" fill="#4b0082"/><polygon points="555.0,480.0 615.0,470.0 615.0,500.0 565.0,535.0 555.0,540.0" fill="#0064ff"/><path d="M566.5 196.7L565.0 724.7M578.0 193.3L575.0 721.3M589.5 190.0L585.0 718.0M601.0 186.7L595.0 714.7M612.5 183.3L605.0 711.3M555.0 217.6L623.7 197.6M555.0 235.2L623.4 215.2M555.0 252.8L623.1 232.8M555.0 270.4L622.8 250.4M555.0 288.0L622.5 268.0M555.0 305.6L622.2 285.6M555.0 323.2L621.9 303.2M555.0 340.8L621.6 320.8M555.0 358.4L621.3 338.4M555.0 376.0L621.0 356.0M555.0 393.6L620.7 373.6M555.0 411.2L620.4 391.2M555.0 428.8L620.1 408.8M555.0 446.4L619.8 426.4M555.0 464.0L619.5 444.0M555.0 481.6L619.2 461.6M555.0 499.2L618.9 479.2M555.0 516.8L618.6 496.8M555.0 534.4L618.3 514.4M555.0 552.0L618.0 532.0M555.0 569.6L617.7 549.6M555.0 587.2L617.4 567.2M555.0 604.8L617.1 584.8M555.0 622.4L616.8 602.4M555.0 640.0L616.5 620.0M555.0 657.6L616.2 637.6M555.0 675.2L615.9 655.2M555.0 692.8L615.6 672.8M555.0 710.4L615.3 690.4" stroke="#0a0a14" stroke-width="1.0" stroke-opacity="0.85" fill="none"/><polygon points="555.0,200.0 624.0,180.0 615.0,708.0 555.0,728.0" fill="none" stroke="#0a0a14" stroke-width="1.2"/><polygon points="441.6,234.0 514.0,215.0 514.0,292.0 441.6,312.0" fill="#4b0082"/><path d="M448.2 232.3L448.2 310.2M454.8 230.5L454.8 308.4M461.3 228.8L461.3 306.5M467.9 227.1L467.9 304.7M474.5 225.4L474.5 302.9M481.1 223.6L481.1 301.1M487.7 221.9L487.7 299.3M494.3 220.2L494.3 297.5M500.8 218.5L500.8 295.6M507.4 216.7L507.4 293.8M441.6 243.8L514.0 224.6M441.6 253.5L514.0 234.2M441.6 263.2L514.0 243.9M441.6 273.0L514.0 253.5M441.6 282.8L514.0 263.1M441.6 292.5L514.0 272.8M441.6 302.2L514.0 282.4" stroke="#0a0a14" stroke-width="0.9" stroke-opacity="0.85" fill="none"/><polygon points="441.6,234.0 514.0,215.0 514.0,292.0 441.6,312.0" fill="none" stroke="#0a0a14" stroke-width="1.2"/><polygon points="514.0,214.0 536.0,209.0 536.0,283.0 514.0,290.0" fill="#3a0a90"/><path d="M519.5 212.8L519.5 288.2M525.0 211.5L525.0 286.5M530.5 210.2L530.5 284.8M514.0 221.6L536.0 216.4M514.0 229.2L536.0 223.8M514.0 236.8L536.0 231.2M514.0 244.4L536.0 238.6M514.0 252.0L536.0 246.0M514.0 259.6L536.0 253.4M514.0 267.2L536.0 260.8M514.0 274.8L536.0 268.2M514.0 282.4L536.0 275.6" stroke="#0a0a14" stroke-width="0.6" stroke-opacity="0.85" fill="none"/><polygon points="514.0,214.0 536.0,209.0 536.0,283.0 514.0,290.0" fill="none" stroke="#0a0a14" stroke-width="1.2"/><polygon points="420.8,229.0 559.0,196.0 559.0,207.0 454.8,234.8 430.0,232.3" fill="#4b0082"/><path d="M429.4 226.9L438.1 230.7M438.1 224.9L446.1 229.1M446.7 222.8L454.2 227.6M455.4 220.8L462.2 226.0M464.0 218.7L470.3 224.4M472.6 216.6L478.4 222.8M481.3 214.6L486.4 221.2M489.9 212.5L494.5 219.7M498.5 210.4L502.6 218.1M507.2 208.4L510.6 216.5M515.8 206.3L518.7 214.9M524.5 204.2L526.8 213.3M533.1 202.2L534.8 211.7M541.7 200.1L542.9 210.2M550.4 198.1L550.9 208.6M423.9 230.1L559.0 199.7M426.9 231.2L559.0 203.3" stroke="#0a0a14" stroke-width="0.8" stroke-opacity="0.85" fill="none"/><polygon points="420.8,229.0 559.0,196.0 559.0,207.0 454.8,234.8 430.0,232.3" fill="none" stroke="#0a0a14" stroke-width="1.1"/><polygon points="420.0,307.8 441.6,299.5 552.0,274.0 552.0,288.0 458.0,315.3" fill="#4b0082"/><path d="M428.8 305.5L464.3 313.5M437.6 303.3L470.5 311.7M446.4 301.0L476.8 309.8M455.2 298.8L483.1 308.0M464.0 296.5L489.3 306.2M472.8 294.3L495.6 304.4M481.6 292.0L501.9 302.6M490.4 289.8L508.1 300.7M499.2 287.5L514.4 298.9M508.0 285.3L520.7 297.1M516.8 283.0L526.9 295.3M525.6 280.8L533.2 293.5M534.4 278.5L539.5 291.6M543.2 276.3L545.7 289.8M439.0 311.6L552.0 281.0" stroke="#0a0a14" stroke-width="0.8" stroke-opacity="0.85" fill="none"/><polygon points="420.0,307.8 441.6,299.5 552.0,274.0 552.0,288.0 458.0,315.3" fill="none" stroke="#0a0a14" stroke-width="1.1"/><polygon points="453.0,466.0 488.0,459.0 556.0,468.0 556.0,489.0 453.0,477.0" fill="#4b0082"/><path d="M460.4 466.1L460.4 477.9M467.7 466.3L467.7 478.7M475.1 466.4L475.1 479.6M482.4 466.6L482.4 480.4M489.8 466.7L489.8 481.3M497.1 466.9L497.1 482.1M504.5 467.0L504.5 483.0M511.9 467.1L511.9 483.9M519.2 467.3L519.2 484.7M526.6 467.4L526.6 485.6M533.9 467.6L533.9 486.4M541.3 467.7L541.3 487.3M548.6 467.9L548.6 488.1M453.0 469.6L556.0 474.9M453.0 473.3L556.0 481.9" stroke="#0a0a14" stroke-width="0.7" stroke-opacity="0.85" fill="none"/><polygon points="453.0,466.0 488.0,459.0 556.0,468.0 556.0,489.0 453.0,477.0" fill="none" stroke="#0a0a14" stroke-width="1.1"/><polygon points="557.0,200.0 575.0,195.0 575.0,513.0 557.0,520.0" fill="#3200c8"/><polygon points="557.0,395.0 575.0,392.0 575.0,530.0 557.0,535.0" fill="#0064ff"/><polygon points="559.0,405.0 573.0,402.0 573.0,468.0 559.0,470.0" fill="#00b9ff"/><polygon points="560.0,415.0 572.0,412.0 572.0,450.0 560.0,455.0" fill="#00e6dc"/><polygon points="565.0,456.0 568.0,455.0 568.0,461.0 565.0,462.0" fill="#a8c830"/><polygon points="575.0,195.0 599.0,195.0 599.0,500.0 575.0,513.0" fill="#4b0082"/><polygon points="578.0,230.0 596.0,225.0 596.0,300.0 578.0,310.0" fill="#3200c8"/><polygon points="578.0,400.0 596.0,395.0 596.0,480.0 578.0,490.0" fill="#3200c8"/><clipPath id="c3"><polygon points="557,200 599,195 599,500 575,513 557,520"/></clipPath><path d="M586.0 231.0L593.9 234.3M586.0 231.0L589.8 240.7M586.0 231.0L583.6 241.5M586.0 231.0L578.7 236.1M586.0 231.0L578.1 227.7M586.0 231.0L582.2 221.3M586.0 231.0L588.4 220.5M586.0 231.0L593.3 225.9M593.9 234.3L589.8 240.7L583.6 241.5L578.7 236.1L578.1 227.7L582.2 221.3L588.4 220.5L593.3 225.9ZM586.0 266.0L593.9 269.3M586.0 266.0L589.8 275.7M586.0 266.0L583.6 276.5M586.0 266.0L578.7 271.1M586.0 266.0L578.1 262.7M586.0 266.0L582.2 256.3M586.0 266.0L588.4 255.5M586.0 266.0L593.3 260.9M593.9 269.3L589.8 275.7L583.6 276.5L578.7 271.1L578.1 262.7L582.2 256.3L588.4 255.5L593.3 260.9ZM582.0 302.0L589.9 305.3M582.0 302.0L585.8 311.7M582.0 302.0L579.6 312.5M582.0 302.0L574.7 307.1M582.0 302.0L574.1 298.7M582.0 302.0L578.2 292.3M582.0 302.0L584.4 291.5M582.0 302.0L589.3 296.9M589.9 305.3L585.8 311.7L579.6 312.5L574.7 307.1L574.1 298.7L578.2 292.3L584.4 291.5L589.3 296.9ZM582.0 337.0L589.9 340.3M582.0 337.0L585.8 346.7M582.0 337.0L579.6 347.5M582.0 337.0L574.7 342.1M582.0 337.0L574.1 333.7M582.0 337.0L578.2 327.3M582.0 337.0L584.4 326.5M582.0 337.0L589.3 331.9M589.9 340.3L585.8 346.7L579.6 347.5L574.7 342.1L574.1 333.7L578.2 327.3L584.4 326.5L589.3 331.9ZM582.0 421.0L589.9 424.3M582.0 421.0L585.8 430.7M582.0 421.0L579.6 431.5M582.0 421.0L574.7 426.1M582.0 421.0L574.1 417.7M582.0 421.0L578.2 411.3M582.0 421.0L584.4 410.5M582.0 421.0L589.3 415.9M589.9 424.3L585.8 430.7L579.6 431.5L574.7 426.1L574.1 417.7L578.2 411.3L584.4 410.5L589.3 415.9ZM581.0 461.0L588.9 464.3M581.0 461.0L584.8 470.7M581.0 461.0L578.6 471.5M581.0 461.0L573.7 466.1M581.0 461.0L573.1 457.7M581.0 461.0L577.2 451.3M581.0 461.0L583.4 450.5M581.0 461.0L588.3 455.9M588.9 464.3L584.8 470.7L578.6 471.5L573.7 466.1L573.1 457.7L577.2 451.3L583.4 450.5L588.3 455.9ZM571.6 337.0L579.5 340.3M571.6 337.0L575.4 346.7M571.6 337.0L569.2 347.5M571.6 337.0L564.3 342.1M571.6 337.0L563.7 333.7M571.6 337.0L567.8 327.3M571.6 337.0L574.0 326.5M571.6 337.0L578.9 331.9M579.5 340.3L575.4 346.7L569.2 347.5L564.3 342.1L563.7 333.7L567.8 327.3L574.0 326.5L578.9 331.9ZM570.0 422.0L577.9 425.3M570.0 422.0L573.8 431.7M570.0 422.0L567.6 432.5M570.0 422.0L562.7 427.1M570.0 422.0L562.1 418.7M570.0 422.0L566.2 412.3M570.0 422.0L572.4 411.5M570.0 422.0L577.3 416.9M577.9 425.3L573.8 431.7L567.6 432.5L562.7 427.1L562.1 418.7L566.2 412.3L572.4 411.5L577.3 416.9ZM569.0 460.0L576.9 463.3M569.0 460.0L572.8 469.7M569.0 460.0L566.6 470.5M569.0 460.0L561.7 465.1M569.0 460.0L561.1 456.7M569.0 460.0L565.2 450.3M569.0 460.0L571.4 449.5M569.0 460.0L576.3 454.9M576.9 463.3L572.8 469.7L566.6 470.5L561.7 465.1L561.1 456.7L565.2 450.3L571.4 449.5L576.3 454.9ZM566.0 240.0L573.9 243.3M566.0 240.0L569.8 249.7M566.0 240.0L563.6 250.5M566.0 240.0L558.7 245.1M566.0 240.0L558.1 236.7M566.0 240.0L562.2 230.3M566.0 240.0L568.4 229.5M566.0 240.0L573.3 234.9M573.9 243.3L569.8 249.7L563.6 250.5L558.7 245.1L558.1 236.7L562.2 230.3L568.4 229.5L573.3 234.9ZM566.0 290.0L573.9 293.3M566.0 290.0L569.8 299.7M566.0 290.0L563.6 300.5M566.0 290.0L558.7 295.1M566.0 290.0L558.1 286.7M566.0 290.0L562.2 280.3M566.0 290.0L568.4 279.5M566.0 290.0L573.3 284.9M573.9 293.3L569.8 299.7L563.6 300.5L558.7 295.1L558.1 286.7L562.2 280.3L568.4 279.5L573.3 284.9ZM586.0 380.0L593.9 383.3M586.0 380.0L589.8 389.7M586.0 380.0L583.6 390.5M586.0 380.0L578.7 385.1M586.0 380.0L578.1 376.7M586.0 380.0L582.2 370.3M586.0 380.0L588.4 369.5M586.0 380.0L593.3 374.9M593.9 383.3L589.8 389.7L583.6 390.5L578.7 385.1L578.1 376.7L582.2 370.3L588.4 369.5L593.3 374.9ZM566.0 380.0L573.9 383.3M566.0 380.0L569.8 389.7M566.0 380.0L563.6 390.5M566.0 380.0L558.7 385.1M566.0 380.0L558.1 376.7M566.0 380.0L562.2 370.3M566.0 380.0L568.4 369.5M566.0 380.0L573.3 374.9M573.9 383.3L569.8 389.7L563.6 390.5L558.7 385.1L558.1 376.7L562.2 370.3L568.4 369.5L573.3 374.9ZM557 200.0L575 205.4L557 214.0M575 204.0L599 211.3L575 218.0M557 214.0L575 220.2L557 228.0M575 218.0L599 225.6L575 232.0M557 228.0L575 235.8L557 242.0M575 232.0L599 236.4L575 246.0M557 242.0L575 246.1L557 256.0M575 246.0L599 255.0L575 260.0M557 256.0L575 261.6L557 270.0M575 260.0L599 265.4L575 274.0M557 270.0L575 280.0L557 284.0M575 274.0L599 280.8L575 288.0M557 284.0L575 293.0L557 298.0M575 288.0L599 294.9L575 302.0M557 298.0L575 305.8L557 312.0M575 302.0L599 306.9L575 316.0M557 312.0L575 319.8L557 326.0M575 316.0L599 325.2L575 330.0M557 326.0L575 333.1L557 340.0M575 330.0L599 338.4L575 344.0M557 340.0L575 348.0L557 354.0M575 344.0L599 348.4L575 358.0M557 354.0L575 362.5L557 368.0M575 358.0L599 365.5L575 372.0M557 368.0L575 373.8L557 382.0M575 372.0L599 376.2L575 386.0M557 382.0L575 391.2L557 396.0M575 386.0L599 392.8L575 400.0M557 396.0L575 404.3L557 410.0M575 400.0L599 409.3L575 414.0M557 410.0L575 418.3L557 424.0M575 414.0L599 423.5L575 428.0M557 424.0L575 430.4L557 438.0M575 428.0L599 436.8L575 442.0M557 438.0L575 444.7L557 452.0M575 442.0L599 451.6L575 456.0M557 452.0L575 461.3L557 466.0M575 456.0L599 460.6L575 470.0M557 466.0L575 470.8L557 480.0M575 470.0L599 475.3L575 484.0M557 480.0L575 489.8L557 494.0M575 484.0L599 490.6L575 498.0M557 494.0L575 501.8L557 508.0M575 498.0L599 503.8L575 512.0M557 508.0L575 515.0L557 522.0M575 512.0L599 518.3L575 526.0" stroke="#0a0a14" stroke-width="0.7" fill="none" stroke-opacity="0.9" clip-path="url(#c3)"/><ellipse cx="586.0" cy="231.0" rx="2" ry="2.8" fill="#00d8c8" stroke="#111" stroke-width="0.6"/><ellipse cx="586.0" cy="266.0" rx="2" ry="2.8" fill="#00d8c8" stroke="#111" stroke-width="0.6"/><ellipse cx="582.0" cy="302.0" rx="2" ry="2.8" fill="#00d8c8" stroke="#111" stroke-width="0.6"/><ellipse cx="571.6" cy="337.0" rx="2" ry="2.8" fill="#00d8c8" stroke="#111" stroke-width="0.6"/><ellipse cx="582.0" cy="337.0" rx="2" ry="2.8" fill="#00d8c8" stroke="#111" stroke-width="0.6"/><ellipse cx="570.0" cy="422.0" rx="2" ry="2.8" fill="#00d8c8" stroke="#111" stroke-width="0.6"/><ellipse cx="582.0" cy="421.0" rx="2" ry="2.8" fill="#00d8c8" stroke="#111" stroke-width="0.6"/><ellipse cx="569.0" cy="460.0" rx="2" ry="2.8" fill="#00d8c8" stroke="#111" stroke-width="0.6"/><ellipse cx="581.0" cy="461.0" rx="2" ry="2.8" fill="#00d8c8" stroke="#111" stroke-width="0.6"/><path d="M557 200V520M575 195V513M599 195V500" stroke="#0a0a14" stroke-width="1.2"/><polygon points="599.0,214.0 880.6,225.6 891.0,375.5 599.0,362.5" fill="#0064ff"/><polygon points="617.4,216.5 880.6,225.6 881.9,245.2 846.8,241.3 794.6,238.7 726.8,236.0 638.2,234.7 617.4,232.1" fill="#00b9ff"/><polygon points="732.1,219.1 747.7,221.7 742.5,229.5 729.4,229.5" fill="#00e6dc"/><polygon points="599.1,215.2 608.2,215.2 608.2,326.0 599.1,326.0" fill="#0a00ff"/><polygon points="655.2,258.2 706.0,246.5 881.9,255.6 884.6,336.4 687.7,336.4 672.1,320.8 655.2,294.7" fill="#0a00ff"/><polygon points="687.7,279.1 716.4,263.4 883.3,266.0 884.6,326.0 726.8,326.0 687.7,313.0" fill="#3200c8"/><polygon points="726.8,284.3 768.6,280.4 883.3,292.1 884.6,313.0 742.5,311.6" fill="#4b0082"/><polygon points="599.1,346.8 690.3,346.8 690.3,363.8 599.1,363.8" fill="#3200c8"/><polygon points="687.7,336.4 884.6,336.4 885.9,349.4 687.7,349.4" fill="#0064ff"/><polygon points="690.3,349.4 885.9,349.4 887.2,362.5 690.3,363.8" fill="#00b9ff"/><polygon points="726.8,362.5 887.2,361.2 888.5,376.0 726.8,376.0" fill="#00e6dc"/><polygon points="700.8,362.5 716.4,356.0 725.5,362.5 722.9,372.9 700.8,374.2" fill="#1a8a4a"/><polygon points="713.8,359.9 719.0,359.9 716.4,367.7" fill="#b8d020"/><path d="M613.8 214.6L614.4 363.2M628.6 215.2L629.7 363.9M643.5 215.8L645.1 364.6M658.3 216.4L660.5 365.2M673.1 217.1L675.8 365.9M687.9 217.7L691.2 366.6M702.7 218.3L706.6 367.3M717.6 218.9L721.9 368.0M732.4 219.5L737.3 368.7M747.2 220.1L752.7 369.3M762.0 220.7L768.1 370.0M776.9 221.3L783.4 370.7M791.7 221.9L798.8 371.4M806.5 222.5L814.2 372.1M821.3 223.2L829.5 372.8M836.1 223.8L844.9 373.4M851.0 224.4L860.3 374.1M865.8 225.0L875.6 374.8M599.0 232.6L881.9 244.3M599.0 251.1L883.2 263.1M599.0 269.7L884.5 281.8M599.0 288.2L885.8 300.6M599.0 306.8L887.1 319.3M599.0 325.4L888.4 338.0M599.0 343.9L889.7 356.8" stroke="#0a0a14" stroke-width="1.1" stroke-opacity="0.85" fill="none"/><polygon points="599.0,214.0 880.6,225.6 891.0,375.5 599.0,362.5" fill="none" stroke="#0a0a14" stroke-width="1.2"/><polygon points="625.2,198.8 900.9,216.9 881.0,226.0 581.0,212.6" fill="#00e6dc"/><polygon points="581.0,212.6 625.2,198.8 660.0,201.0 615.0,215.0" fill="#00b9ff"/><path d="M639.7 199.8L596.8 213.3M654.2 200.7L612.6 214.0M668.7 201.7L628.4 214.7M683.2 202.6L644.2 215.4M697.8 203.6L659.9 216.1M712.3 204.5L675.7 216.8M726.8 205.5L691.5 217.5M741.3 206.4L707.3 218.2M755.8 207.4L723.1 218.9M770.3 208.3L738.9 219.7M784.8 209.3L754.7 220.4M799.3 210.2L770.5 221.1M813.8 211.2L786.3 221.8M828.3 212.1L802.1 222.5M842.9 213.1L817.8 223.2M857.4 214.0L833.6 223.9M871.9 215.0L849.4 224.6M886.4 215.9L865.2 225.3M610.5 203.4L894.3 219.9M595.7 208.0L887.6 223.0" stroke="#0a0a14" stroke-width="0.9" stroke-opacity="0.85" fill="none"/><polygon points="625.2,198.8 900.9,216.9 881.0,226.0 581.0,212.6" fill="none" stroke="#0a0a14" stroke-width="1.2"/><polygon points="579.5,366.4 598.0,362.5 891.0,375.5 912.0,374.2 872.8,388.5 579.5,372.0" fill="#00e6dc"/><polygon points="579.6,366.4 599.1,362.5 674.7,370.3 674.7,374.2 579.6,370.3" fill="#3200c8"/><polyline points="579.5,366.4 598.0,362.5 891.0,375.5 912.0,374.2 872.8,388.5 579.5,371.0" fill="none" stroke="#0a0a14" stroke-width="1.2"/><path d="M688.2 375.9L686.0 377.6M701.3 375.8L697.0 378.3M714.5 375.7L708.0 378.9M727.7 375.6L719.0 379.6M740.8 375.5L729.9 380.2M754.0 375.4L740.9 380.8M767.2 375.3L751.9 381.5M780.3 375.2L762.9 382.1M793.5 375.1L773.9 382.8M806.7 375.0L784.9 383.4M819.8 374.9L795.9 384.0M833.0 374.8L806.9 384.7M846.2 374.7L817.9 385.3M859.3 374.6L828.8 385.9M872.5 374.5L839.8 386.6M885.7 374.4L850.8 387.2M898.8 374.3L861.8 387.9" stroke="#0a0a14" stroke-width="0.8" stroke-opacity="0.85" fill="none"/><polygon points="596.3,372.2 677.0,378.2 596.3,476.0" fill="#0a00ff"/><polygon points="596.3,372.2 672.8,378.2 644.6,410.4 620.4,402.4 596.3,392.3" fill="#0064ff"/><polygon points="596.3,390.3 620.4,400.4 632.5,416.5 624.5,434.6 596.3,470.9" fill="#00b9ff"/><polygon points="598.3,404.4 612.4,410.4 620.4,426.6 608.4,438.6 598.3,446.7" fill="#00e6dc"/><polygon points="620.4,380.2 644.6,382.2 636.6,396.3 626.5,394.3" fill="#00b9ff"/><clipPath id="c4"><polygon points="596.3,372.2 677.0,378.2 596.3,476.0"/></clipPath><path d="M603.6 372.7L603.6 476.0M611.0 373.3L611.0 476.0M618.3 373.8L618.3 476.0M625.6 374.4L625.6 476.0M633.0 374.9L633.0 476.0M640.3 375.5L640.3 476.0M647.7 376.0L647.7 476.0M655.0 376.6L655.0 476.0M662.3 377.1L662.3 476.0M669.7 377.7L669.7 476.0M596.3 379.6L677.0 385.2M596.3 387.0L677.0 392.2M596.3 394.4L677.0 399.2M596.3 401.9L677.0 406.1M596.3 409.3L677.0 413.1M596.3 416.7L677.0 420.1M596.3 424.1L677.0 427.1M596.3 431.5L677.0 434.1M596.3 438.9L677.0 441.1M596.3 446.3L677.0 448.1M596.3 453.8L677.0 455.0M596.3 461.2L677.0 462.0M596.3 468.6L677.0 469.0" stroke="#0a0a14" stroke-width="0.8" stroke-opacity="0.85" fill="none" clip-path="url(#c4)"/><polygon points="596.3,372.2 677.0,378.2 596.3,476.0" fill="none" stroke="#0a0a14" stroke-width="1.2"/><polygon points="675.0,379.0 705.0,378.0 619.4,482.0 579.0,493.0" fill="#0a00ff"/><polygon points="690.0,379.0 705.0,378.0 640.0,455.0 625.0,458.0" fill="#3200c8"/><polygon points="610.0,450.0 640.0,445.0 619.4,482.0 590.0,488.0" fill="#3200c8"/><path d="M682.5 378.8L589.1 490.2M690.0 378.5L599.2 487.5M697.5 378.2L609.3 484.8M667.0 388.5L697.9 386.7M659.0 398.0L690.7 395.3M651.0 407.5L683.6 404.0M643.0 417.0L676.5 412.7M635.0 426.5L669.3 421.3M627.0 436.0L662.2 430.0M619.0 445.5L655.1 438.7M611.0 455.0L647.9 447.3M603.0 464.5L640.8 456.0M595.0 474.0L633.7 464.7M587.0 483.5L626.5 473.3" stroke="#0a0a14" stroke-width="0.8" stroke-opacity="0.85" fill="none"/><polygon points="675.0,379.0 705.0,378.0 619.4,482.0 579.0,493.0" fill="none" stroke="#0a0a14" stroke-width="1.2"/><polygon points="573.0,483.0 615.0,475.0 615.0,500.0 573.0,511.0" fill="#4b0082"/><polygon points="590.0,490.0 615.0,485.0 615.0,500.0 595.0,505.0" fill="#3200c8"/><path d="M587.0 480.3L587.0 507.3M601.0 477.7L601.0 503.7M573.0 497.0L615.0 487.5" stroke="#0a0a14" stroke-width="0.8" stroke-opacity="0.85" fill="none"/><polygon points="573.0,483.0 615.0,475.0 615.0,500.0 573.0,511.0" fill="none" stroke="#0a0a14" stroke-width="1.2"/></svg>
</body></html>
